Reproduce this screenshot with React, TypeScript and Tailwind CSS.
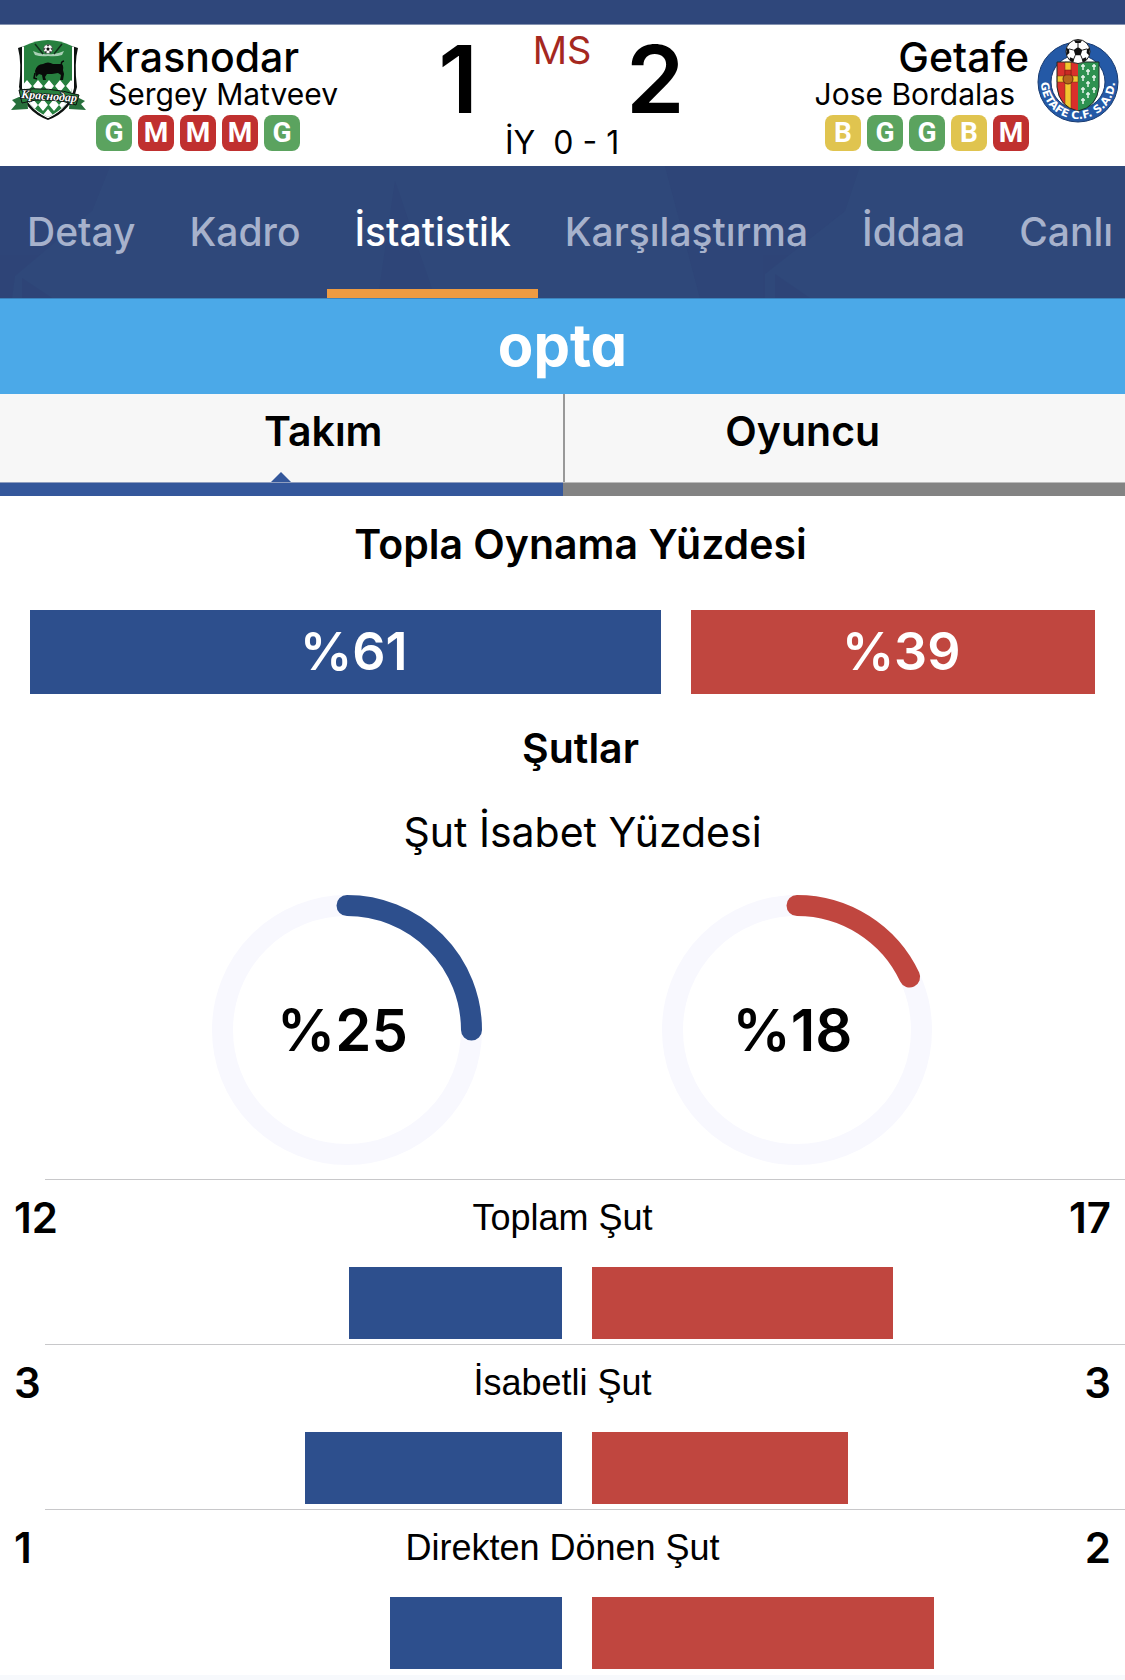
import * as React from "react"
import { clsx } from "clsx"

type Result = "G" | "B" | "M"

const NAV_ITEMS = ["Detay", "Kadro", "İstatistik", "Karşılaştırma", "İddaa", "Canlı"]

const SHOT_STATS = [
  { label: "Toplam Şut", home: 12, away: 17 },
  { label: "İsabetli Şut", home: 3, away: 3 },
  { label: "Direkten Dönen Şut", home: 1, away: 2 },
]

const RESULT_COLORS: Record<Result, string> = {
  G: "bg-[#5ba35f]",
  B: "bg-[#e0c44f]",
  M: "bg-[#c0302f]",
}

const SoccerBall = ({ x, y, r }: { x: number; y: number; r: number }) => (
  <g transform={`translate(${x} ${y}) scale(${r / 12})`}>
    <circle r="12" fill="#fff" stroke="#222" strokeWidth="1" />
    <path d="M0-4.5 4.3-1.4 2.7 3.7-2.7 3.7-4.3-1.4Z" fill="#111" />
    <path d="M-4-11.3 4-11.3 2.5-8.6-2.5-8.6Z" fill="#111" />
    <path d="M11.6-3.5 11.4 4 8.6 1.4 9-2.6Z" fill="#111" />
    <path d="M-11.6-3.5-11.4 4-8.6 1.4-9-2.6Z" fill="#111" />
    <path d="M3.8 7.6 8 5.8 8.6 8.4 4.6 11Z" fill="#111" />
    <path d="M-3.8 7.6-8 5.8-8.6 8.4-4.6 11Z" fill="#111" />
    <path
      d="M0-4.5V-8.6M4.3-1.4 9-2.6M2.7 3.7 4.5 8M-2.7 3.7-4.5 8M-4.3-1.4-9-2.6"
      stroke="#222"
      strokeWidth="1"
    />
  </g>
)

const KrasnodarCrest = () => (
  <svg viewBox="0 0 78 82" className="h-[82px] w-[78px] shrink-0" aria-hidden="true">
    <defs>
      <clipPath id="shield">
        <path d="M14 7Q38-5 62 7V49Q60 68 38 78Q16 68 14 49Z" />
      </clipPath>
    </defs>
    <path d="M8 9 14 7V50Q17 69 38 79Q59 69 62 50V7L68 9Q64 24 67 48Q62 72 38 81Q14 72 9 48Q12 24 8 9Z" fill="#0d1210" />
    <path d="M13 7.500V49Q17 68 38 78Q59 68 63 49V7.500" fill="none" stroke="#fff" strokeWidth="2" />
    <g clipPath="url(#shield)">
      <rect width="78" height="82" fill="#27803f" />
      <g fill="#fff">
        <path d="M17 41l5 6-5 6-5-6zM28 41l5 6-5 6-5-6zM39 41l5 6-5 6-5-6zM50 41l5 6-5 6-5-6zM61 41l5 6-5 6-5-6z" />
        <path d="M23 60l5 6-5 6-5-6zM33 60l5 6-5 6-5-6zM44 60l5 6-5 6-5-6zM54 60l5 6-5 6-5-6zM38 70l5 6-5 6-5-6z" />
      </g>
    </g>
    {/* Ribbon and ball */}
    <path d="M23 12Q31 16 38 15Q46 16 54 12L52 16Q46 18 38 17Q31 18 25 16Z" fill="#a9cfb5" />
    <path d="M25 5 33 15M52 5 44 15" stroke="#12301c" strokeWidth="1.500" />
    <SoccerBall x={38} y={10} r={4.5} />
    {/* Bull */}
    <path
      d="M25 32Q27 25 33 25Q38 22 43 25H51Q54 26 53 31L54 35 53 41H50L51 36 48 34 42 35 37 35 35 38 36 41H33L32 36 29 35 26 38Z"
      fill="#080b09"
    />
    <path d="M25 34 24 39 27 40M52 27Q50 23 54 22" fill="none" stroke="#080b09" strokeWidth="1.500" />
    {/* Banner */}
    <path d="M9 58 2 61 6 65 1 71 18 70 17 57ZM67 58 75 62 71 65 76 71 59 70 60 57Z" fill="#27703c" />
    <path d="M9 51Q38 47 69 56L66 66Q38 56 12 64Z" fill="#27803f" stroke="#0d1210" strokeWidth="1" />
    <text
      x="39"
      y="61"
      transform="rotate(4 39 58)"
      textAnchor="middle"
      fontSize="12"
      fontWeight="700"
      fontStyle="italic"
      fill="#fff"
      stroke="#0d1210"
      strokeWidth="1.500"
      paintOrder="stroke"
      className="font-['Liberation_Serif',serif]"
    >
      Краснодар
    </text>
  </svg>
)

const GetafeCrest = () => (
  <svg viewBox="0 0 82 84" className="h-[84px] w-[82px] shrink-0" aria-hidden="true">
    <defs>
      <path id="ring" d="M4 43A37 37 0 0 0 78 43" />
    </defs>
    <circle cx="41" cy="43" r="40" fill="#2459a6" stroke="#173a70" strokeWidth="1" />
    <circle cx="41" cy="43" r="27" fill="#fff" stroke="#173a70" strokeWidth="1" />
    <path d="M20 23H41V72Q22 68 20 48Z" fill="#d9302b" />
    <path d="M41 23H62V48Q60 68 41 72Z" fill="#2d9150" />
    <path d="M28 23H34V70L28 66Z" fill="#f3c62f" stroke="#5c3b12" strokeWidth="0.500" />
    <path d="M20 37H41V43H20Z" fill="#f3c62f" stroke="#5c3b12" strokeWidth="0.500" />
    <circle cx="31" cy="40" r="5" fill="#b5651d" stroke="#6b2a12" strokeWidth="1" />
    <path d="M28 36V31H34V36Z" fill="#c92a22" stroke="#6b1212" strokeWidth="0.500" />
    <path
      d="M46 25v6M44 27h4M46 36v6M44 38h4M46 48v6M44 50h4M46 59v6M44 61h4M51 30v6M49 32h4M51 42v6M49 44h4M51 53v6M49 55h4M57 25v6M55 27h4M57 36v6M55 38h4M57 48v6M55 50h4"
      stroke="#e8f5ec"
      strokeWidth="1.500"
    />
    <path d="M20 23H62V48Q60 68 41 72Q22 68 20 48Z" fill="none" stroke="#1c2b26" strokeWidth="1" />
    <SoccerBall x={41} y={12.5} r={12} />
    <text fontSize="11" fontWeight="700" fill="#fff" className="font-['DejaVu_Sans',sans-serif]">
      <textPath href="#ring" startOffset="50%" textAnchor="middle">
        GETAFE C.F. S.A.D.
      </textPath>
    </text>
  </svg>
)

const FormBadges = ({ results }: { results: Result[] }) => (
  <ul className="mt-0.5 flex gap-1.5">
    {results.map((result, index) => (
      <li
        key={index}
        className={clsx(
          "flex size-9 items-center justify-center rounded-lg font-[Roboto,sans-serif] text-[28px] font-bold text-white",
          RESULT_COLORS[result]
        )}
      >
        {result}
      </li>
    ))}
  </ul>
)

const MatchHeader = () => (
  <header className="flex justify-between bg-white">
    <div className="flex flex-1 gap-2 pt-3.5 pb-[15px] pl-2.5">
      <KrasnodarCrest />
      <div>
        <h1 className="text-[41px] leading-9 font-medium">Krasnodar</h1>
        <p className="pl-3 text-[30px] leading-[38px]">Sergey Matveev</p>
        <FormBadges results={["G", "M", "M", "M", "G"]} />
      </div>
    </div>

    <div className="flex pr-1.5">
      <span className="text-[94px] leading-[108px] font-semibold">1</span>
      <div className="flex w-[148px] flex-col items-center justify-between pl-5">
        <span className="text-[38px] leading-[50px] text-[#a5281f]">MS</span>
        <span className="text-[32px] leading-[46px] whitespace-pre">İY  0 - 1</span>
      </div>
      <span className="text-[94px] leading-[108px] font-semibold">2</span>
    </div>

    <div className="flex flex-1 justify-end gap-2 pt-3.5 pr-1.5 pb-[15px]">
      <div className="flex flex-col items-end">
        <h1 className="text-[41px] leading-9 font-medium">Getafe</h1>
        <p className="pr-3.5 text-[30px] leading-[38px]">Jose Bordalas</p>
        <FormBadges results={["B", "G", "G", "B", "M"]} />
      </div>
      <GetafeCrest />
    </div>
  </header>
)

const MatchNav = () => (
  <nav className="relative overflow-hidden bg-[#2f487a]">
    <svg className="absolute inset-0 size-full" viewBox="0 0 1125 132" preserveAspectRatio="none" aria-hidden="true">
      <g fill="#2e4276" opacity="0.500">
        <path d="M0 0H110L92 45 15 110 12 132H0Z" />
        <path d="M22 112 52 132H22Z" />
        <path d="M665 0 700 132H765V108L845 45 860 0Z" />
        <path d="M395 15 378 132H435Z" />
        <path d="M775 108 810 132H775Z" />
      </g>
    </svg>
    <ul className="relative flex">
      {NAV_ITEMS.map((item) => {
        const active = item === "İstatistik"
        return (
          <li key={item} className="relative shrink-0">
            <a
              href="#"
              aria-current={active ? "page" : undefined}
              className={clsx(
                "block px-[27px] text-[39px] leading-[132px] font-medium",
                active ? "text-white" : "text-[#a7b2cc]"
              )}
            >
              {item}
            </a>
            {active && <span className="absolute inset-x-0 bottom-0 h-[9px] bg-[#ed9b42]" />}
          </li>
        )
      })}
    </ul>
  </nav>
)

const ViewTabs = () => (
  <div role="tablist" className="grid grid-cols-2 bg-[#f7f7f7] text-[41px] leading-[74px] font-semibold">
    <button role="tab" aria-selected="true" className="relative pb-3.5 pl-[84px]">
      Takım
      <svg viewBox="0 0 20 10" className="absolute bottom-0 left-1/2 h-2.5 w-5 -translate-x-1/2" aria-hidden="true">
        <path d="M0 10 10 0 20 10Z" fill="#34579b" />
      </svg>
    </button>
    <button role="tab" aria-selected="false" className="border-l-2 border-l-[#999] pr-[84px] pb-3.5">
      Oyuncu
    </button>
    <div className="h-3.5 border-t border-t-[#8f9ec0] bg-[#34579b]" />
    <div className="h-3.5 border-t border-t-[#bbb] bg-[#838383]" />
  </div>
)

const Possession = ({ home, away }: { home: number; away: number }) => (
  <div className="mx-[30px] mt-[18px] flex gap-[30px] text-center text-[52px] leading-[84px] font-semibold text-white">
    <div className="basis-0 bg-[#2d4f8d]" style={{ flexGrow: home }}>
      <span className="pl-4">%{home}</span>
    </div>
    <div className="basis-0 bg-[#c0463f]" style={{ flexGrow: away }}>
      <span className="pl-4">%{away}</span>
    </div>
  </div>
)

const AccuracyRing = ({ value, color }: { value: number; color: string }) => (
  <div className="grid size-[270px] place-items-center">
    <svg viewBox="0 0 270 270" className="col-start-1 row-start-1 size-full" fill="none" strokeWidth="21" aria-hidden="true">
      <circle cx="135" cy="135" r="124.5" stroke="#f8f8fe" />
      <circle
        cx="135"
        cy="135"
        r="124.5"
        stroke={color}
        strokeLinecap="round"
        pathLength="100"
        strokeDasharray={`${value} 100`}
        transform="rotate(-90 135 135)"
      />
    </svg>
    <span className="col-start-1 row-start-1 pr-2 text-[58px] font-semibold">%{value}</span>
  </div>
)

const StatRow = ({ label, home, away }: { label: string; home: number; away: number }) => {
  const total = home + away

  return (
    <li className="pb-[5px]">
      <div className="ml-[45px] h-px bg-[#c8c8ca]" />
      <div className="grid grid-cols-[1fr_auto_1fr] px-3.5 text-[42px] leading-[76px] font-semibold">
        <span>{home}</span>
        <span className="font-['Liberation_Sans',sans-serif] text-[36px] font-normal">{label}</span>
        <span className="text-right">{away}</span>
      </div>
      <div className="mt-[11px] grid h-[72px] grid-cols-2 gap-[30px] pr-5 pl-12">
        <div className="justify-self-end bg-[#2d4f8d]" style={{ width: `${(home / total) * 100}%` }} />
        <div className="bg-[#c0463f]" style={{ width: `${(away / total) * 100}%` }} />
      </div>
    </li>
  )
}

export default function App() {
  return (
    <div className="min-h-screen overflow-x-hidden bg-[#f7f9fc] font-[Inter,sans-serif] text-black">
      <div className="h-[25px] border-b border-b-[#8492b0] bg-[#2f477b]" />
      <MatchHeader />
      <MatchNav />
      <div className="flex h-24 justify-center border-t border-t-[#3c84bd] bg-[#4ba9e8]">
        <span className="text-[58px] leading-[92px] font-bold text-white [font-feature-settings:'cv11']">opta</span>
      </div>
      <ViewTabs />
      <main className="bg-white pb-px">
        <h2 className="pl-9 text-center text-[41px] leading-[96px] font-semibold">Topla Oynama Yüzdesi</h2>
        <Possession home={61} away={39} />
        <h2 className="mt-[18px] pl-9 text-center text-[41px] leading-[72px] font-semibold">Şutlar</h2>
        <h3 className="pl-10 text-center text-[41px] leading-[96px]">Şut İsabet Yüzdesi</h3>
        <div className="mt-[15px] mb-[14px] flex justify-center gap-[180px] pl-[18px]">
          <AccuracyRing value={25} color="#2d4f8d" />
          <AccuracyRing value={18} color="#c0463f" />
        </div>
        <ul>
          {SHOT_STATS.map((stat) => (
            <StatRow key={stat.label} {...stat} />
          ))}
        </ul>
      </main>
    </div>
  )
}
